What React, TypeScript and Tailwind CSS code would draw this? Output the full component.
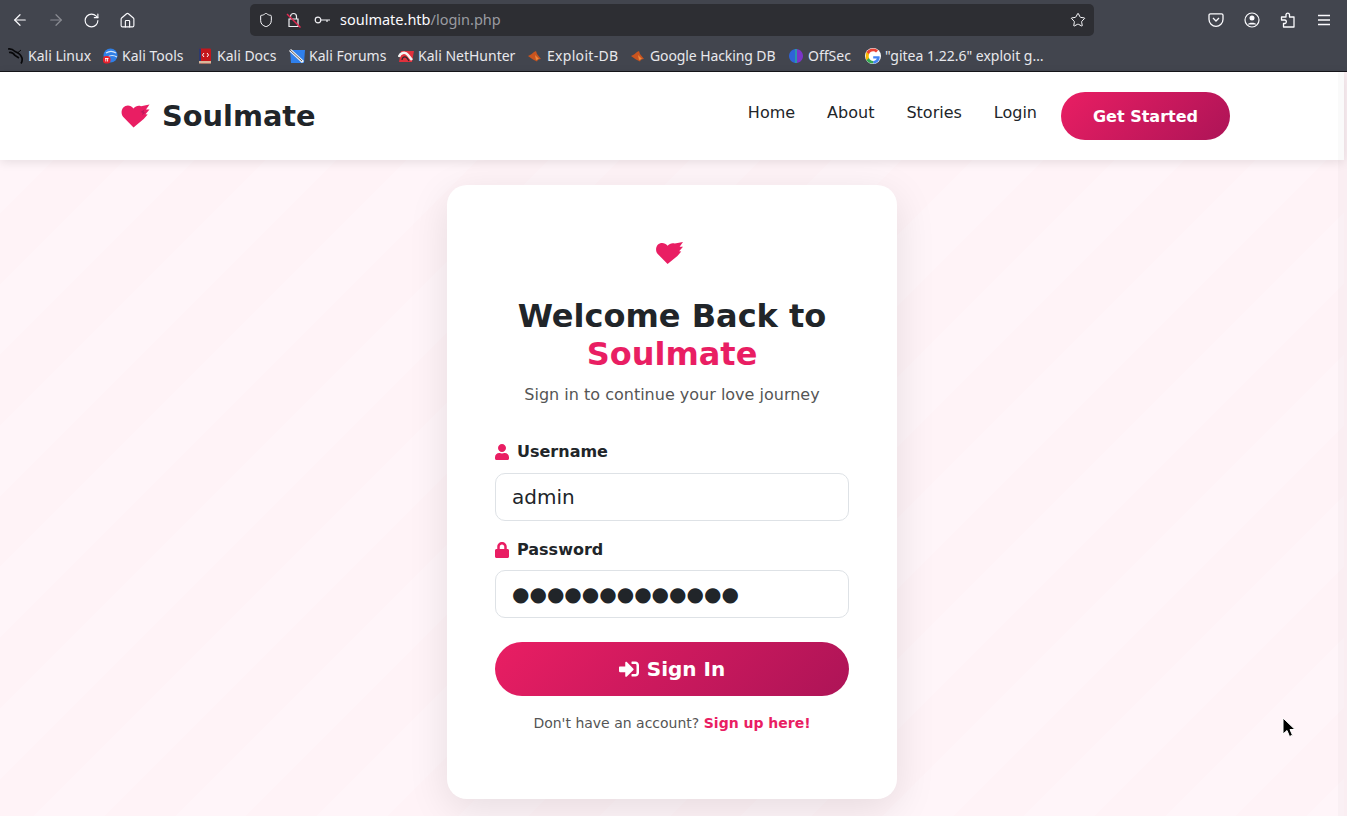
import { FaLock, FaSignInAlt, FaUser } from 'react-icons/fa'
import { ArrowLeft, ArrowRight, RotateCw, Home, Shield, Star } from 'lucide-react'

const HeartLogo = ({ className, mark }: { className: string; mark?: boolean }) => (
  <svg viewBox="0 0 28 24" className={className}>
    <path
      fill="#e91e63"
      d="M12 23.500 1.800 13C-.6 10.300-.4 6 1.800 3.500 4.500.6 9.300.8 12 4.500 14 2.300 16.500 1.300 19.500 2.200L28 .5l-3.500 5H28l-4 4.700 2.200.2-4 4.600z"
    />
    {mark && <path fill="#b3165a" d="M19 8l4-2.500-1 2.700 2 .2-3.500 2.800.8-2.400z" opacity="0.8" />}
  </svg>
)

const Favicon = ({ kind }: { kind: string }) => {
  if (kind === 'kali')
    return (
      <svg viewBox="0 0 16 16" className="w-4 h-4 shrink-0" fill="none" stroke="#08080a" strokeWidth="1.700">
        <path d="M0 1c3-.5 5 .5 7 2.500 2.500 1 6 3 7 6.500.4 2 0 4-1 5.500" />
        <path d="M1 4.500c2.500-.5 4.500.5 6 3l4 2.500" />
        <path d="M10 4.500 13 2" strokeWidth="1" />
      </svg>
    )
  if (kind === 'tools')
    return (
      <svg viewBox="0 0 16 16" className="w-4 h-4 shrink-0">
        <circle cx="8.500" cy="7.500" r="7" fill="#2f7fe6" />
        <path d="M4 5c3-2 7-2 10 0M6 9c2-2 6-2 9 0" stroke="#d6e6f8" strokeWidth="1.200" fill="none" />
        <rect x="1" y="8" width="7.500" height="7.500" rx="3" fill="#e8202c" />
        <path d="M3 10.500h3.500M3.800 10.500v3M5.600 10.500v3" stroke="#fff" strokeWidth="0.900" />
      </svg>
    )
  if (kind === 'docs')
    return (
      <svg viewBox="0 0 16 16" className="w-4 h-4 shrink-0">
        <rect x="2" y="0.500" width="12" height="15" rx="1" fill="#c4161c" />
        <rect x="2" y="0.500" width="2" height="15" fill="#2c3a70" />
        <rect x="2" y="13" width="12" height="2.500" fill="#d8b79a" />
        <path d="M7 5 5.500 7 7 9M10 5l1.500 2L10 9" stroke="#fff" strokeWidth="1" fill="none" />
      </svg>
    )
  if (kind === 'forums')
    return (
      <svg viewBox="0 0 16 16" className="w-4 h-4 shrink-0">
        <path d="M1 2h15l-1 13H2z" fill="#2f80ed" />
        <path d="M1 2l13 12" stroke="#f2f2f2" strokeWidth="3" />
        <path d="M1 2l12 11" stroke="#33333a" strokeWidth="0.800" />
      </svg>
    )
  if (kind === 'hunter')
    return (
      <svg viewBox="0 0 16 16" className="w-4 h-4 shrink-0">
        <path d="M3 3h13l-2 11H1z" fill="#e0303c" />
        <path d="M1 9c1-4 6-6 9-2l4 5" stroke="#f3f3f3" strokeWidth="2.600" fill="none" />
        <path d="M4 12c0-3 3-4 5-2l2 3" stroke="#2a2a30" strokeWidth="1.200" fill="none" />
      </svg>
    )
  if (kind === 'exploit')
    return (
      <svg viewBox="0 0 16 16" className="w-4 h-4 shrink-0">
        <path d="M1 8c2-1 4-2 6-4l2-1 1 3 4 5-3 .5-1 2-4-2z" fill="#c9541f" />
        <path d="M8 7l4 4-3 1z" fill="#ef8a3c" />
      </svg>
    )
  if (kind === 'offsec')
    return (
      <svg viewBox="0 0 16 16" className="w-4 h-4 shrink-0">
        <path d="M7 1C3 2 1 5 1 8s2 6 6 7z" fill="#2e63d8" />
        <path d="M9 1c4 1 6 4 6 7s-2 6-6 7z" fill="#7a35c8" />
        <path d="M8 1v14" stroke="#22b8d8" strokeWidth="1.400" />
      </svg>
    )
  return (
    <svg viewBox="0 0 16 16" className="w-4 h-4 shrink-0">
      <circle cx="8" cy="8" r="8" fill="#fff" />
      <path d="M14.500 8.200H8.200v2.300h3.600c-.5 1.500-1.900 2.400-3.600 2.400V15.500c3.800 0 6.500-2.800 6.500-6.600z" fill="#4285f4" />
      <path d="M8.200 12.900c-2 0-3.600-1.200-4.200-2.900H1.500v2.200c1.300 2.400 3.800 3.300 6.700 3.300z" fill="#34a853" />
      <path d="M4 10c-.4-1.200-.4-2.600 0-3.800V4H1.500c-1 2.300-1 5.800 0 8.200z" fill="#fbbc05" />
      <path d="M8.200 3.300c1.100 0 2 .4 2.800 1.100l2-2C11.700 1.200 10.100.5 8.200.5 5.300.5 2.800 1.800 1.500 4L4 6.200c.6-1.700 2.200-2.900 4.200-2.900z" fill="#ea4335" />
    </svg>
  )
}

const bookmarks = [
  { kind: 'kali', label: 'Kali Linux', w: 'w-[82px]' },
  { kind: 'tools', label: 'Kali Tools', w: 'w-[83px]' },
  { kind: 'docs', label: 'Kali Docs', w: 'w-[80px]' },
  { kind: 'forums', label: 'Kali Forums', w: 'w-[97px]' },
  { kind: 'hunter', label: 'Kali NetHunter', w: 'w-[117px]' },
  { kind: 'exploit', label: 'Exploit-DB', w: 'w-[91px] tracking-[0.3px]' },
  { kind: 'exploit', label: 'Google Hacking DB', w: 'w-[146px] tracking-[-0.1px]' },
  { kind: 'offsec', label: 'OffSec', w: 'w-[65px]' },
  { kind: 'google', label: '"gitea 1.22.6" exploit g…', w: 'w-[180px]' },
]

const BrowserChrome = () => (
  <div className="bg-[#42454e] text-[#fbfbfe] font-['Noto_Sans',sans-serif] border-b border-[#15151a]">
    <div className="h-10 flex items-center pl-[11px] pr-[15px]">
      <div className="flex items-center gap-[18px] w-[239px]">
        <ArrowLeft size={18} strokeWidth={1.600} />
        <ArrowRight size={18} strokeWidth={1.600} className="text-[#8a8c93]" />
        <RotateCw size={17} strokeWidth={1.600} />
        <Home size={17} strokeWidth={1.600} className="ml-px" />
      </div>
      <div className="w-[844px] h-8 bg-[#2d2e33] rounded-[5px] flex items-center pl-2 pr-2 text-[14.500px]">
        <Shield size={16} strokeWidth={1.500} />
        <svg viewBox="0 0 16 16" className="w-4 h-4 ml-[12px]" fill="none">
          <path d="M4.500 7V4.500a3 3 0 0 1 6 0V7M3 7h9v7.500H3z" stroke="#f0f0f4" strokeWidth="1.200" />
          <path d="M1 2 14.500 15.500" stroke="#e22850" strokeWidth="1.400" />
        </svg>
        <svg viewBox="0 0 16 16" className="w-4 h-4 ml-[12px]" fill="none" stroke="#f0f0f4" strokeWidth="1.200">
          <circle cx="4" cy="8" r="2.800" />
          <path d="M7 8h9M13 8v2" />
        </svg>
        <span className="ml-[10px]">soulmate.htb</span>
        <span className="text-[#9a9ba1]">/login.php</span>
        <Star size={16} strokeWidth={1.500} className="ml-auto" />
      </div>
      <div className="ml-auto flex items-center gap-[20px]">
        <svg viewBox="0 0 16 16" className="w-4 h-4" fill="none" stroke="#fbfbfe" strokeWidth="1.300">
          <path d="M2.500 1.800h11q1.500 0 1.500 1.500v4a7 7 0 0 1-14 0v-4q0-1.500 1.500-1.500z" />
          <path d="M5 6l3 3 3-3" />
        </svg>
        <svg viewBox="0 0 16 16" className="w-4 h-4" fill="none" stroke="#fbfbfe" strokeWidth="1.200">
          <circle cx="8" cy="8" r="7" />
          <circle cx="8" cy="6" r="2.500" fill="#fbfbfe" stroke="none" />
          <path d="M3.500 12.500c1-2.500 8-2.500 9 0" fill="#fbfbfe" stroke="none" />
        </svg>
        <svg viewBox="0 0 16 16" className="w-4 h-4" fill="none" stroke="#fbfbfe" strokeWidth="1.300">
          <path d="M1.500 5H6V2.500a1.800 1.800 0 0 1 3.500 0V5H14v10H3.500v-3.500H5a1.800 1.800 0 0 0 0-3.500H1.500z" strokeLinejoin="round" />
        </svg>
        <svg viewBox="0 0 16 16" className="w-4 h-4" fill="none" stroke="#fbfbfe" strokeWidth="1.300">
          <path d="M2 3.500h12M2 8h12M2 12.500h12" />
        </svg>
      </div>
    </div>
    <div className="h-[31px] flex items-start pl-2 pt-[6px] gap-3 text-[14px] leading-5 text-[#e8e8ec]">
      {bookmarks.map((b) => (
        <div key={b.label} className={`flex items-center gap-1 ${b.w}`}>
          <Favicon kind={b.kind} />
          <span className="whitespace-nowrap">{b.label}</span>
        </div>
      ))}
    </div>
  </div>
)

const Navbar = () => (
  <nav className="h-[88px] bg-white shadow-[0_2px_10px_rgba(0,0,0,0.1)] relative">
    <div className="w-[1116px] h-full mx-auto flex items-center justify-between">
      <div className="flex items-center gap-3 pl-[7px]">
        <HeartLogo mark className="w-[29px] h-[24px]" />
        <span className="text-[28.800px] font-bold text-[#212529] pt-px">Soulmate</span>
      </div>
      <div className="flex items-center">
        <div className="flex items-center gap-8 text-[16px] text-[#212529] mb-[6px] mr-6">
          <span>Home</span>
          <span>About</span>
          <span>Stories</span>
          <span>Login</span>
        </div>
        <button className="w-[169px] h-12 pt-px rounded-full bg-[linear-gradient(135deg,#e91e63,#ad1457)] text-white font-bold text-[16px]">
          Get Started
        </button>
      </div>
    </div>
  </nav>
)

const Field = ({ icon, label, value, labelClass }: { icon: React.ReactNode; label: string; value: string; labelClass: string }) => (
  <div>
    <div className={`flex items-center gap-[8px] text-[16px] font-bold text-[#212529] ${labelClass}`}>
      <span className="w-[14px] flex justify-center text-[#e91e63]">{icon}</span>
      {label}
    </div>
    <input
      readOnly
      type="text"
      value={value}
      className="w-full h-12 bg-white border border-[#dee2e6] rounded-[10px] px-4 text-[20px] text-[#212529] outline-none"
    />
  </div>
)

const LoginCard = () => (
  <div className="w-[450px] h-[614px] mt-[25px] bg-white rounded-[20px] shadow-[0_10px_40px_rgba(0,0,0,0.1)] px-12 pt-14 text-center">
    <HeartLogo className="w-[27px] h-[24px] ml-[161px]" />
    <h1 className="mt-[32px] text-[32px] leading-[38px] font-bold text-[#212529]">
      Welcome Back to <span className="text-[#e91e63]">Soulmate</span>
    </h1>
    <p className="mt-[10px] text-[16px] leading-6 text-[#555]">Sign in to continue your love journey</p>
    <div className="mt-[32px] text-left flex flex-col gap-[15px]">
      <Field icon={<FaUser size={16} />} label="Username" value="admin" labelClass="h-[25px] mb-[9px]" />
      <Field icon={<FaLock size={16} />} label="Password" value="●●●●●●●●●●●●●" labelClass="h-[27px] mb-[7px]" />
    </div>
    <button className="w-full h-[54px] mt-6 rounded-full bg-[linear-gradient(135deg,#e91e63,#ad1457)] text-white font-bold text-[20px] flex items-center justify-center gap-2">
      <FaSignInAlt size={20} />
      Sign In
    </button>
    <p className="mt-[17px] text-[14px] leading-[20px] text-[#555]">
      Don't have an account? <span className="font-bold text-[#e91e63]">Sign up here!</span>
    </p>
  </div>
)

export default function App() {
  return (
    <div className="h-[816px] overflow-hidden relative font-['DejaVu_Sans',sans-serif] bg-[#fff3f7]">
      <BrowserChrome />
      <div className="w-[1344px] h-[744px] flex flex-col bg-[repeating-linear-gradient(135deg,#fff3f7_0px,#fff3f7_50px,#fff5f9_50px,#fff5f9_100px)]">
        <Navbar />
        <div className="flex justify-center">
          <LoginCard />
        </div>
      </div>
      {/* overlay scrollbar */}
      <div className="absolute top-[72px] right-0 bottom-0 w-[9px] bg-[rgba(120,120,120,0.04)]" />
      {/* mouse cursor */}
      <svg viewBox="0 0 14 22" className="absolute left-[1282px] top-[717px] w-[14px] h-[22px]">
        <path d="M1 1v16l4-3.500 2.500 6 3-1.300-2.500-5.700h5z" fill="#000" stroke="#fff" strokeWidth="1" />
      </svg>
    </div>
  )
}
